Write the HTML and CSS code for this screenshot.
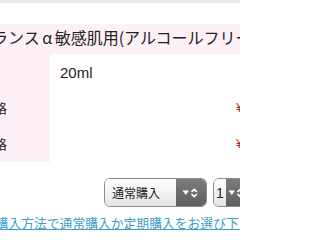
FILE: index.html
```html
<!DOCTYPE html>
<html lang="ja">
<head>
<meta charset="utf-8">
<title>商品詳細</title>
<link rel="stylesheet" href="styles.css">
</head>
<body>
<div class="frame">
  <div class="topbar"></div>
  <div class="title"><span class="title-text">バランス<span class="fw">α</span>敏感肌用(アルコールフリー)</span></div>
  <div class="spec">
    <div class="row">
      <div class="label"><span class="label-text">内容量</span></div>
      <div class="value">20ml</div>
    </div>
    <div class="row">
      <div class="label"><span class="label-text">販売価格</span></div>
      <div class="value price"><span class="price-text">¥2,970</span></div>
    </div>
    <div class="row">
      <div class="label"><span class="label-text">定期価格</span></div>
      <div class="value price"><span class="price-text">¥2,673</span></div>
    </div>
  </div>
  <div class="selects">
    <div class="select sel-type">
      <span class="sel-label">通常購入</span>
      <span class="sel-btn"><svg width="16" height="10" viewBox="0 0 16 10"><path d="M0.5 2.5 L7 2.5 L3.75 7 Z" fill="#fff"/><path d="M9.5 4 L12.2 1.3 L14.9 4 M9.5 6 L12.2 8.7 L14.9 6" fill="none" stroke="#fff" stroke-width="1.7" stroke-linejoin="round"/></svg></span>
    </div>
    <div class="select sel-qty">
      <span class="sel-label">1</span>
      <span class="sel-btn"><svg width="16" height="10" viewBox="0 0 16 10"><path d="M0.5 2.5 L7 2.5 L3.75 7 Z" fill="#fff"/><path d="M9.5 4 L12.2 1.3 L14.9 4 M9.5 6 L12.2 8.7 L14.9 6" fill="none" stroke="#fff" stroke-width="1.7" stroke-linejoin="round"/></svg></span>
    </div>
  </div>
  <p class="note"><a href="#" class="note-link">※ご購入方法で通常購入か定期購入をお選び下さい。</a></p>
</div>
</body>
</html>
```
FILE: styles.css
```css
html, body {
  margin: 0;
  padding: 0;
  overflow: hidden;
  background: #fff;
}
body {
  font-family: "Liberation Sans", "Noto Sans CJK JP", sans-serif;
  color: #222;
}
.frame {
  width: 240px;
  height: 240px;
  overflow: hidden;
}
.topbar {
  height: 3px;
  background: #ececec;
  margin-bottom: 21px;
}
.title {
  background: #fdf0f6;
  font-family: "Noto Sans CJK JP", sans-serif;
  font-size: 16px;
  line-height: 26px;
  height: 26px;
  padding-bottom: 4px;
  white-space: nowrap;
  overflow: hidden;
  color: #222;
}
.title-text {
  display: block;
  margin-left: -24px;
}
.fw {
  display: inline-block;
  width: 15px;
  text-align: center;
}
.spec {
  display: flex;
  flex-direction: column;
}
.row {
  display: grid;
  grid-template-columns: 50px 190px;
  height: 36px;
}
.label {
  background: #fdf0f6;
  font-family: "Noto Sans CJK JP", sans-serif;
  font-size: 13px;
  line-height: 36px;
  white-space: nowrap;
  overflow: hidden;
  color: #222;
}
.label-text {
  display: block;
  margin-left: -45px;
}
.value {
  font-size: 15px;
  line-height: 34px;
  padding: 2px 0 0 10px;
  overflow: hidden;
}
.price {
  display: flex;
  justify-content: flex-start;
  font-size: 12px;
  line-height: 36px;
  padding: 0 0 0 186px;
  color: #a8282c;
  white-space: nowrap;
}
.price-text {
  flex: none;
}
.selects {
  display: flex;
  gap: 6px;
  margin-top: 16px;
  padding-left: 104px;
  overflow: hidden;
}
.select {
  flex: none;
  display: flex;
  height: 27px;
  border: 1px solid #8c8c8c;
  border-radius: 6px;
  overflow: hidden;
  font-family: "Noto Sans CJK JP", sans-serif;
  font-size: 12px;
}
.sel-type { width: 101px; }
.sel-qty { width: 46px; }
.sel-label {
  flex: 1;
  display: flex;
  align-items: center;
  padding-left: 7px;
  background: linear-gradient(#ffffff, #e4e4e4);
  color: #222;
}
.sel-qty .sel-label {
  flex: 0 0 12px;
  padding-left: 0;
  justify-content: center;
  font-family: "Liberation Sans", sans-serif;
  font-size: 14px;
}
.sel-btn {
  flex: 0 0 30px;
  display: flex;
  align-items: center;
  justify-content: flex-end;
  padding-right: 8px;
  box-sizing: border-box;
  background: linear-gradient(#7c7c7c, #5e5e5e);
}
.sel-qty .sel-btn {
  flex: 1;
  justify-content: flex-start;
  padding: 0 0 0 2px;
}
.note {
  margin: 7px 0 0;
  font-family: "Noto Sans CJK JP", sans-serif;
  font-size: 12.8px;
  line-height: 18px;
  white-space: nowrap;
  overflow: hidden;
}
.note-link {
  display: block;
  margin-left: -30px;
  color: #3d9dc6;
  text-decoration: underline;
}
```
